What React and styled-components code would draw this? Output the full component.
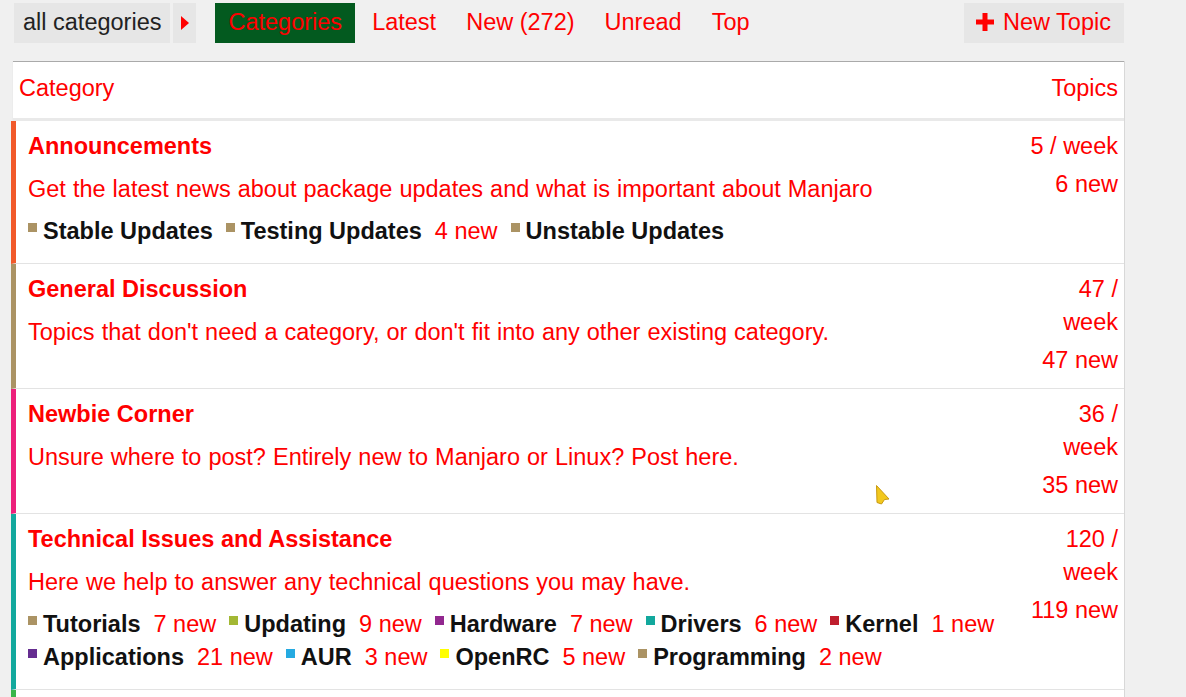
import React from 'react';
import styled, { createGlobalStyle } from 'styled-components';

const GlobalStyle = createGlobalStyle`
  body {
    margin: 0;
    background: #f0f0f0;
    font-family: "Liberation Sans", Arial, sans-serif;
    font-size: 23.5px;
    color: #ff0000;
  }
`;

const Page = styled.div`
  position: relative;
  width: 1111px;
  margin-left: 13px;
  padding-top: 3px;
`;

const NavBar = styled.div`
  display: flex;
  align-items: center;
  height: 40px;
  margin-bottom: 18px;
`;

const Dropdown = styled.div`
  height: 40px;
  line-height: 38px;
  background: #e6e6e6;
  color: #222;
  padding: 0 9px;
  margin-left: 1px;
  white-space: nowrap;
`;

const Caret = styled.div`
  height: 40px;
  width: 23px;
  margin-left: 3px;
  background: #e6e6e6;
  display: flex;
  align-items: center;
  justify-content: center;
  padding-bottom: 1px;
  box-sizing: border-box;
`;

const NavList = styled.div`
  display: flex;
  gap: 4px;
  margin-left: 19px;
`;

const NavLink = styled.a`
  height: 40px;
  line-height: 38px;
  padding: 0 13px;
  color: #ff0000;
  background: ${p => (p.active ? '#035a1f' : 'transparent')};
  text-decoration: none;
`;

const NewTopic = styled.button`
  margin-left: auto;
  height: 40px;
  width: 160px;
  border: none;
  background: #e6e6e6;
  color: #ff0000;
  font: inherit;
  display: flex;
  align-items: center;
  gap: 9px;
  padding: 0 0 2px 12px;
`;

const Table = styled.div`
  background: #fff;
  border-top: 1px solid #aaa;
  box-shadow: 1px 0 0 #d8d8d8, -1px 0 0 #ececec;
`;

const HeadRow = styled.div`
  display: flex;
  justify-content: space-between;
  align-items: center;
  box-sizing: border-box;
  height: 59px;
  padding: 0 6px 4px;
  border-bottom: 3px solid #e9e9e9;
`;

const Row = styled.div`
  display: flex;
  margin-left: -2px;
  border-left: 5px solid ${p => p.bar};
  border-bottom: 1px solid #e3e3e3;
`;

const Main = styled.div`
  flex: 1;
  padding: 9px 0 15px 12px;
`;

const Title = styled.div`
  font-weight: bold;
  line-height: 33px;
`;

const Desc = styled.div`
  line-height: 33px;
  margin-top: 10px;
  word-spacing: 0.5px;
`;

const SubList = styled.div`
  margin-top: 9px;
  line-height: 33px;
  padding-right: 8px;
`;

const SubItem = styled.span`
  display: inline-block;
  white-space: nowrap;
  margin-right: 13px;
`;

const Swatch = styled.span`
  display: inline-block;
  width: 9px;
  height: 9px;
  background: ${p => p.color};
  margin-right: 6px;
  vertical-align: 7px;
`;

const SubName = styled.span`
  font-weight: bold;
  color: #111;
`;

const SubNew = styled.span`
  margin-left: 13px;
`;

const Stats = styled.div`
  width: 94px;
  padding: 9px 6px 11px 0;
  text-align: right;
`;

const Stat = styled.div`
  line-height: 33px;
  & + & {
    margin-top: 5px;
  }
`;

const Cursor = styled.svg`
  position: absolute;
  left: 862px;
  top: 484px;
`;

const categories = [
  {
    title: 'Announcements',
    bar: '#f1592a',
    desc: 'Get the latest news about package updates and what is important about Manjaro',
    subs: [
      { name: 'Stable Updates', color: '#ab9364' },
      { name: 'Testing Updates', color: '#ab9364', fresh: 4 },
      { name: 'Unstable Updates', color: '#ab9364' },
    ],
    week: '5 / week',
    fresh: 6,
  },
  {
    title: 'General Discussion',
    bar: '#ab9364',
    desc: "Topics that don't need a category, or don't fit into any other existing category.",
    subs: [],
    week: '47 / week',
    fresh: 47,
  },
  {
    title: 'Newbie Corner',
    bar: '#ed207b',
    desc: 'Unsure where to post? Entirely new to Manjaro or Linux? Post here.',
    subs: [],
    week: '36 / week',
    fresh: 35,
  },
  {
    title: 'Technical Issues and Assistance',
    bar: '#12a89d',
    desc: 'Here we help to answer any technical questions you may have.',
    subs: [
      { name: 'Tutorials', color: '#ab9364', fresh: 7 },
      { name: 'Updating', color: '#a3b834', fresh: 9 },
      { name: 'Hardware', color: '#92278f', fresh: 7 },
      { name: 'Drivers', color: '#12a89d', fresh: 6 },
      { name: 'Kernel', color: '#bf1e2e', fresh: 1 },
      { name: 'Applications', color: '#652d90', fresh: 21 },
      { name: 'AUR', color: '#25aae1', fresh: 3 },
      { name: 'OpenRC', color: '#ffff00', fresh: 5 },
      { name: 'Programming', color: '#ab9364', fresh: 2 },
    ],
    week: '120 / week',
    fresh: 119,
  },
  {
    title: '',
    bar: '#3ab54a',
    desc: '',
    subs: [],
    week: '',
    fresh: null,
  },
];

const Plus = () => (
  <svg width="18" height="18" viewBox="0 0 18 18">
    <path d="M6.5 0h5v6.5H18v5h-6.5V18h-5v-6.5H0v-5h6.5z" fill="#ff0000" />
  </svg>
);

const CategoryRow = ({ cat }) => (
  <Row bar={cat.bar}>
    <Main>
      <Title>{cat.title}</Title>
      <Desc>{cat.desc}</Desc>
      {cat.subs.length > 0 && (
        <SubList>
          {cat.subs.map(s => (
            <SubItem key={s.name}>
              <Swatch color={s.color} />
              <SubName>{s.name}</SubName>
              {s.fresh && <SubNew>{s.fresh} new</SubNew>}
            </SubItem>
          ))}
        </SubList>
      )}
    </Main>
    <Stats>
      <Stat>{cat.week}</Stat>
      {cat.fresh !== null && <Stat>{cat.fresh} new</Stat>}
    </Stats>
  </Row>
);

export default function App() {
  return (
    <>
      <GlobalStyle />
      <Page>
        <NavBar>
          <Dropdown>all categories</Dropdown>
          <Caret>
            <svg width="8" height="14" viewBox="0 0 8 14">
              <path d="M0 0L8 7L0 14z" fill="#ff0000" />
            </svg>
          </Caret>
          <NavList>
            <NavLink active>Categories</NavLink>
            <NavLink>Latest</NavLink>
            <NavLink>New (272)</NavLink>
            <NavLink>Unread</NavLink>
            <NavLink>Top</NavLink>
          </NavList>
          <NewTopic>
            <Plus />
            New Topic
          </NewTopic>
        </NavBar>
        <Table>
          <HeadRow>
            <span>Category</span>
            <span>Topics</span>
          </HeadRow>
          {categories.map((c, i) => (
            <CategoryRow key={i} cat={c} />
          ))}
        </Table>
        <Cursor width="16" height="22" viewBox="0 0 16 22">
          <path d="M1.5 1.5L14 15L9.5 15.5L6.5 20L2 18.5z" fill="#f2c81e" stroke="#c99a10" strokeWidth="1" />
        </Cursor>
      </Page>
    </>
  );
}
